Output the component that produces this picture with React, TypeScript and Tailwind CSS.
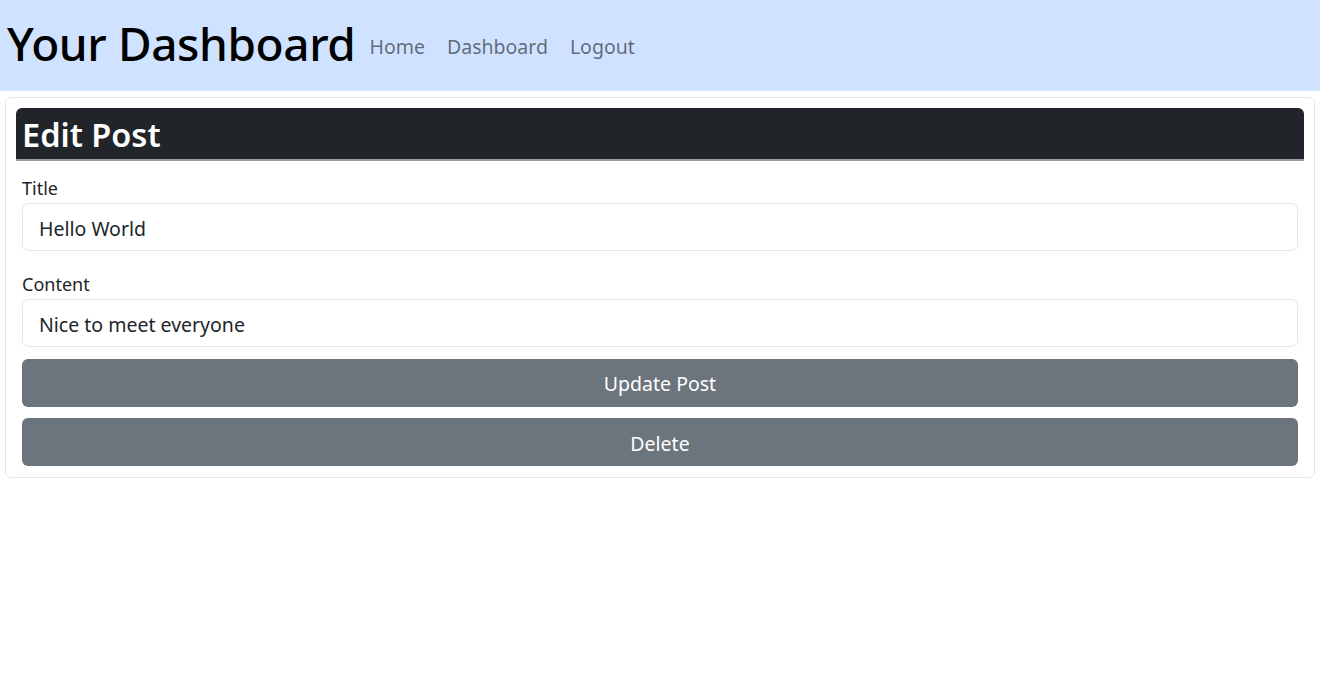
export default function App() {
  return (
    <div className="min-h-[680px] bg-white text-[#212529]" style={{ fontFamily: '"Noto Sans", "Open Sans", sans-serif' }}>
      <header className="flex h-[91px] items-center bg-[#cfe2ff] px-[7px]">
        <h1 className="mb-[5px] text-[46px] font-medium leading-none tracking-[-0.4px] text-black">Your Dashboard</h1>
        <nav className="ml-[14px] mt-[2px] flex gap-[22px] text-[19.5px] text-black/55">
          <a href="#">Home</a>
          <a href="#">Dashboard</a>
          <a href="#">Logout</a>
        </nav>
      </header>

      <div className="mx-[5px] mt-[6px] rounded-[6px] border border-[#e3e6ea] px-[10px] pb-[11px] pt-[10px]">
        <div className="flex h-[53px] items-center rounded-t-[6px] border-b-2 border-[#9a9da1] bg-[#212529] px-[6px]">
          <h2 className="mt-[3px] text-[32.5px] font-semibold text-white">Edit Post</h2>
        </div>
        <form className="px-[6px] pt-[14px]" onSubmit={(e) => e.preventDefault()}>
          <label className="block text-[18px] leading-[27px]">Title</label>
          <input
            defaultValue="Hello World"
            className="mt-[1px] block h-[48px] w-full rounded-[6px] border border-[#e6e8eb] px-[16px] pt-[3px] text-[19.5px] text-[#212529] outline-none"
          />
          <label className="mt-[20px] block text-[18px] leading-[27px]">Content</label>
          <input
            defaultValue="Nice to meet everyone"
            className="mt-[1px] block h-[48px] w-full rounded-[6px] border border-[#e6e8eb] px-[16px] pt-[3px] text-[19.5px] text-[#212529] outline-none"
          />
          <button className="mt-[12px] block h-[48px] w-full rounded-[6px] bg-[#6c757d] pt-[2px] text-[19.5px] text-white">
            Update Post
          </button>
          <button className="mt-[11px] block h-[48px] w-full rounded-[6px] bg-[#6c757d] pt-[3px] text-[19.5px] text-white">
            Delete
          </button>
        </form>
      </div>
    </div>
  );
}
